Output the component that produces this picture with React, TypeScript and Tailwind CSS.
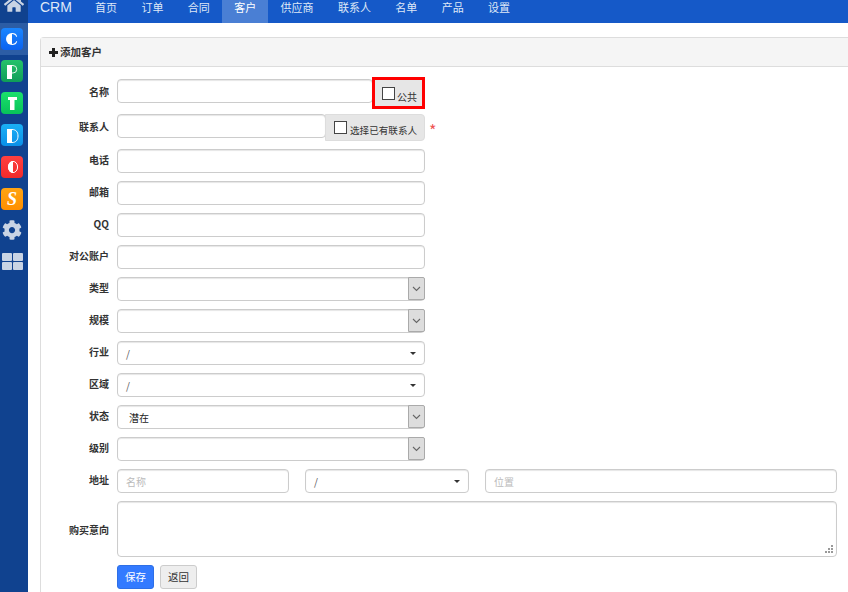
import React from 'react';
import { FaCog, FaHome } from 'react-icons/fa';

const navItems = ['首页', '订单', '合同', '客户', '供应商', '联系人', '名单', '产品', '设置'];

// two-tone app logos from the side rail
const logoMarks: Record<string, React.ReactNode> = {
  C: (
    <>
      <path d="M11 5A6 6 0 0 0 11 17Z" fill="#fff" />
      <path d="M11 5C14 5 15.6 6 16.2 8.8H15.2C14.6 7 13 6 11 6ZM11 17C14 17 15.6 16 16.2 13.2H15.2C14.6 15 13 16 11 16Z" fill="#fff" />
    </>
  ),
  P: (
    <>
      <rect x="6" y="5" width="5" height="14" fill="#fff" />
      <path d="M11 5.5H12A3.7 3.7 0 0 1 12 13H11" fill="none" stroke="#e4f6ea" strokeWidth="1" />
    </>
  ),
  T: (
    <>
      <rect x="7" y="5" width="9" height="3" fill="#fff" />
      <rect x="9" y="5" width="4.5" height="13" fill="#fff" />
    </>
  ),
  D: (
    <>
      <rect x="6" y="5" width="5" height="14" fill="#fff" />
      <path d="M11 5.5C15 5.5 17 8 17 12C17 16 15 18.5 11 18.5" fill="none" stroke="#fff" strokeWidth="1" />
    </>
  ),
  O: (
    <>
      <ellipse cx="12" cy="11" rx="4.6" ry="5.6" fill="none" stroke="#fff" strokeWidth="1" />
      <path d="M12 5A5 6 0 0 0 12 17Z" fill="#fff" />
    </>
  ),
};

const appIcons = [
  { name: 'C', bg: 'bg-[linear-gradient(#1a86ff,#0a62f0)]' },
  { name: 'P', bg: 'bg-[linear-gradient(#25c26a,#0f9d58)]' },
  { name: 'T', bg: 'bg-[linear-gradient(#1be06c,#08c259)]' },
  { name: 'D', bg: 'bg-[linear-gradient(#1bb0f5,#0a8fe8)]' },
  { name: 'O', bg: 'bg-[linear-gradient(#ff4040,#f02a2a)]' },
  { name: 'S', bg: 'bg-[linear-gradient(#ffa412,#ff8f00)]' },
];

const inputClass =
  'block h-6 rounded-[4px] border border-[#ccc] bg-white px-2 text-[10px] text-[#555] shadow-[inset_0_1px_1px_rgba(0,0,0,0.1)] outline-none placeholder:text-[#bbb]';

const Row: React.FC<{ label: string; className?: string; labelClass?: string; children: React.ReactNode }> = ({
  label,
  className = 'h-6',
  labelClass = 'leading-[22px]',
  children,
}) => (
  <div className={`flex items-start gap-2 ${className}`}>
    <label className={`h-6 w-[68px] shrink-0 text-right text-[10px] font-bold text-[#333] ${labelClass}`}>{label}</label>
    {children}
  </div>
);

// native-looking select with the grey square arrow
const GreySelect: React.FC<{ value?: string }> = ({ value }) => (
  <div className="flex h-6 w-[308px] rounded-[4px] border border-[#ccc] bg-white shadow-[inset_0_1px_1px_rgba(0,0,0,0.1)]">
    <span className="flex-1 pl-[11px] text-[10px] leading-[24px] text-[#222]">{value}</span>
    <span className="-mr-px -mt-px flex h-[23px] w-[17px] items-center justify-center rounded-r-[2px] border border-[#aaa] bg-[#ddd]">
      <svg width="9" height="6" viewBox="0 0 9 6" fill="none" stroke="#666" strokeWidth="1.1">
        <path d="M1 1l3.5 3.5L8 1" />
      </svg>
    </span>
  </div>
);

const CaretSelect: React.FC<{ className?: string }> = ({ className = 'w-[308px]' }) => (
  <div
    className={`flex h-6 items-center justify-between rounded-[4px] border border-[#ccc] bg-white pl-2 pr-[8px] text-[10px] text-[#555] shadow-[inset_0_1px_1px_rgba(0,0,0,0.1)] ${className}`}
  >
    <span>/</span>
    <span className="border-x-[3px] border-t-[3px] border-x-transparent border-t-[#333]" />
  </div>
);

const App: React.FC = () => {
  return (
    <div className="flex h-[592px] w-[848px] flex-col overflow-hidden bg-white font-['Noto_Sans_CJK_SC','Liberation_Sans',sans-serif]">
      <div className="flex h-[23px] shrink-0 bg-[#1559c8] text-[11px] leading-[14px] text-[#dfe8f7]">
        <div className="flex w-[28px] justify-center overflow-hidden bg-[#10428f]">
          <FaHome className="-mt-[6px] shrink-0 text-[20px] text-[#c9d4e4]" />
        </div>
        <div className="pl-3 pr-[11px] font-['Liberation_Sans',sans-serif] text-[14px] leading-[15px]">CRM</div>
        {navItems.map((item) => (
          <div key={item} className={`px-[12.2px] ${item === '客户' ? 'bg-[#4a7fd4] text-white' : ''}`}>
            {item}
          </div>
        ))}
      </div>

      <div className="flex min-h-0 flex-1">
        <div className="flex w-[28px] shrink-0 flex-col items-start bg-[#10428f]">
          {appIcons.map((icon, i) => (
            <div key={icon.name} className={`flex h-[32px] w-full items-center pl-[1px] ${i === 0 ? 'bg-[#2c5da5]' : ''}`}>
              <div
                className={`flex h-[22px] w-[22px] items-center justify-center rounded-[4px] font-['Liberation_Serif',serif] text-[18px] font-bold italic leading-none text-white ${icon.bg}`}
              >
                {logoMarks[icon.name] ? (
                  <svg width="22" height="22" viewBox="0 0 22 22">
                    {logoMarks[icon.name]}
                  </svg>
                ) : (
                  icon.name
                )}
              </div>
            </div>
          ))}
          <div className="flex h-[30px] w-[24px] items-center justify-center">
            <FaCog className="text-[20px] text-[#c9d4e4]" />
          </div>
          <div className="ml-[2px] mt-2 grid grid-cols-2 gap-[1px]">
            {[0, 1, 2, 3].map((n) => (
              <span key={n} className="h-2 w-[10px] rounded-[1px] bg-[#c9d4e4]" />
            ))}
          </div>
        </div>

        <div className="min-w-0 flex-1 pl-3 pt-[14px]">
          <div className="h-[600px] rounded-tl-[4px] border-l border-t border-[#ddd]">
            <div className="flex h-[29px] items-center gap-[2px] border-b border-[#ddd] bg-[#f5f5f5] pl-2 text-[10.5px] font-bold text-[#333]">
              <svg width="9" height="9" viewBox="0 0 9 9" fill="#222">
                <rect x="3" y="0" width="3" height="9" />
                <rect x="0" y="3" width="9" height="3" />
              </svg>
              添加客户
            </div>

            <div className="flex w-[796px] flex-col gap-2 pt-3">
              <Row label="名称" className="h-[27px]" labelClass="leading-[26px]">
                <input className={`${inputClass} w-[256px]`} />
                <div className="-ml-[9px] -mt-[2px] flex h-[32px] w-[53px] items-center gap-[2px] border-[3px] border-[#f00] bg-[#e6e6e6] pl-[7px] text-[10px] text-[#333]">
                  <input type="checkbox" className="h-[13px] w-[13px] appearance-none border border-[#444] bg-white" />
                  <span className="mt-[6px]">公共</span>
                </div>
              </Row>

              <Row label="联系人" className="h-[27px]" labelClass="leading-[26px]">
                <input className={`${inputClass} w-[209px]`} />
                <div className="-ml-[9px] flex h-[27px] w-[100px] items-center gap-[3px] rounded-r-[4px] border border-[#ddd] bg-[#e6e6e6] pl-2 text-[9.6px] text-[#333]">
                  <input type="checkbox" className="h-[13px] w-[13px] appearance-none border border-[#444] bg-white" />
                  <span className="mt-[5px] whitespace-nowrap">选择已有联系人</span>
                </div>
                <span className="-ml-1 mt-[7px] text-[16px] leading-[18px] text-[#e55]">*</span>
              </Row>

              <Row label="电话">
                <input className={`${inputClass} w-[308px]`} />
              </Row>
              <Row label="邮箱">
                <input className={`${inputClass} w-[308px]`} />
              </Row>
              <Row label="QQ">
                <input className={`${inputClass} w-[308px]`} />
              </Row>
              <Row label="对公账户">
                <input className={`${inputClass} w-[308px]`} />
              </Row>
              <Row label="类型">
                <GreySelect />
              </Row>
              <Row label="规模">
                <GreySelect />
              </Row>
              <Row label="行业">
                <CaretSelect />
              </Row>
              <Row label="区域">
                <CaretSelect />
              </Row>
              <Row label="状态">
                <GreySelect value="潜在" />
              </Row>
              <Row label="级别">
                <GreySelect />
              </Row>

              <Row label="地址">
                <input placeholder="名称" className={`${inputClass} w-[172px]`} />
                <CaretSelect className="ml-2 w-[164px]" />
                <input placeholder="位置" className={`${inputClass} ml-2 w-[352px]`} />
              </Row>

              <div className="flex items-center gap-2">
                <label className="w-[68px] shrink-0 text-right text-[10px] font-bold text-[#333]">购买意向</label>
                <div className="relative">
                  <textarea className="block h-14 w-[720px] resize-none rounded-[4px] border border-[#ccc] bg-white shadow-[inset_0_1px_1px_rgba(0,0,0,0.1)] outline-none" />
                  <svg className="absolute bottom-[3px] right-[3px]" width="9" height="9" viewBox="0 0 9 9" fill="#999">
                    <rect x="6" y="0" width="2" height="2" />
                    <rect x="3" y="3" width="2" height="2" />
                    <rect x="6" y="3" width="2" height="2" />
                    <rect x="0" y="6" width="2" height="2" />
                    <rect x="3" y="6" width="2" height="2" />
                    <rect x="6" y="6" width="2" height="2" />
                  </svg>
                </div>
              </div>

              <div className="flex gap-[6px] pl-[76px]">
                <button className="h-6 w-[37px] rounded-[3px] border border-[#2e6fe6] bg-[#337aff] text-[10.5px] text-white">保存</button>
                <button className="h-6 w-[37px] rounded-[3px] border border-[#ccc] bg-[#eee] text-[10.5px] text-[#333]">返回</button>
              </div>
            </div>
          </div>
        </div>
      </div>
    </div>
  );
};

export default App;
